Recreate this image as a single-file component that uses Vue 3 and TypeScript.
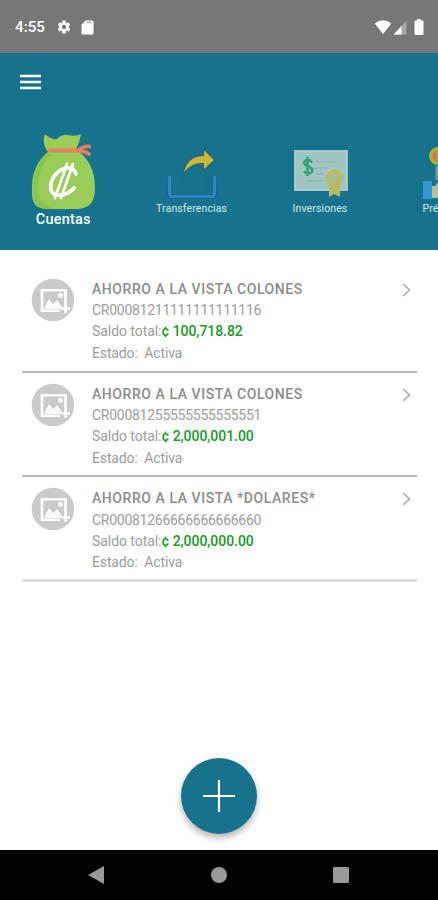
<script setup lang="ts">
interface Account {
  name: string
  number: string
  balance: string
  status: string
}

const accounts: Account[] = [
  { name: 'AHORRO A LA VISTA COLONES', number: 'CR00081211111111111116', balance: '100,718.82', status: 'Activa' },
  { name: 'AHORRO A LA VISTA COLONES', number: 'CR00081255555555555551', balance: '2,000,001.00', status: 'Activa' },
  { name: 'AHORRO A LA VISTA *DOLARES*', number: 'CR00081266666666666660', balance: '2,000,000.00', status: 'Activa' },
]
</script>

<template>
  <div class="screen">
    <header class="status">
      <span class="time">4:55</span>
      <svg class="gear" width="16" height="16" viewBox="0 0 24 24" fill="#fff"><path d="M19.14 12.94a7 7 0 0 0 0-1.88l2.03-1.58a.5.5 0 0 0 .12-.61l-1.92-3.32a.5.5 0 0 0-.59-.22l-2.39.96a7 7 0 0 0-1.62-.94l-.36-2.54A.5.5 0 0 0 13.92 2.4h-3.84a.5.5 0 0 0-.48.41l-.36 2.54a7.3 7.3 0 0 0-1.62.94l-2.39-.96a.5.5 0 0 0-.59.22L2.74 8.87a.5.5 0 0 0 .12.61l2.03 1.58a7 7 0 0 0 0 1.88l-2.03 1.58a.5.5 0 0 0-.12.61l1.92 3.32c.12.22.37.29.59.22l2.39-.96c.5.38 1.03.7 1.62.94l.36 2.54c.05.24.24.41.48.41h3.84c.24 0 .44-.17.47-.41l.36-2.54a7 7 0 0 0 1.62-.94l2.39.96c.22.08.47 0 .59-.22l1.92-3.32a.5.5 0 0 0-.12-.61zM12 15.2a3.2 3.2 0 1 1 0-6.4 3.2 3.2 0 0 1 0 6.4z" /></svg>
      <svg class="card" width="13" height="15" viewBox="0 0 13 15"><path d="M4.7.5H11A1.5 1.5 0 0 1 12.5 2v11a1.5 1.5 0 0 1-1.5 1.5H2A1.5 1.5 0 0 1 .5 13V4.7z" fill="#fff" /><path d="M5.500 2.500h5" stroke="#aaa" stroke-width="1.500" /></svg>
      <div class="signals">
        <svg width="18" height="15" viewBox="0 0 18 15"><path d="M.7 3.500Q9-2.800 17.300 3.500L9 14z" fill="#fff" /></svg>
        <svg width="14" height="15" viewBox="0 0 14 15"><path d="M13.500.5v14H.5z" fill="#a8a8a8" /><path d="M8.500 5.900v8.600H.5z" fill="#fff" /></svg>
        <svg class="battery" width="10" height="16" viewBox="0 0 10 16"><path d="M3 0h4v1.500h1.500q1 0 1 1V15q0 1-1 1h-7q-1 0-1-1V2.500q0-1 1-1H3z" fill="#fff" /></svg>
      </div>
    </header>

    <section class="top">
      <svg class="menu" width="21" height="16" viewBox="0 0 21 16" stroke="#fff" stroke-width="2.400"><path d="M0 2h21M0 8h21M0 14h21" /></svg>
      <nav class="tabs">
        <div class="tab active">
          <svg width="66" height="78" viewBox="0 0 66 78">
            <path d="M18 19C13 12 13 6 15 1q6 6 12 5 5-5 11-4 7 2 13-1-1 8-5 15C58 25 65 36 65 55 65 71 58 76 45 76H19C6 76 2 71 2 59 1 41 7 28 18 19z" fill="#9acd57" />
            <path d="M17 21C6 30 2 43 3 60c1 10 5 15 14 16h8C11 70 5 62 8 50c2-10 4-21 15-29z" fill="#8bc350" />
            <path d="M20 17.500h28q6-5 11-4M47 17.500q7 0 12 3.500" fill="none" stroke="#e8815e" stroke-width="3.800" stroke-linecap="round" />
            <g fill="none" stroke="#fff" stroke-linecap="round"><path d="M46 41c-2-7-11-8-18-2-9 8-10 21-1 23 6 1 13-2 17-7" stroke-width="3.800" /><path d="M37 31 25 65M43 31 31 65" stroke-width="2.700" /></g>
          </svg>
          <span>Cuentas</span>
        </div>
        <div class="tab">
          <svg width="56" height="54" viewBox="0 0 56 54">
            <path d="M6 29H3v18q0 4 4 4h42q4 0 4-4V29h-3v17q0 2-3 2H9q-3 0-3-2z" fill="#1d609b" />
            <path d="M5.500 29v16.500q0 3 3 3h39q3 0 3-3V29" fill="none" stroke="#2f86c2" stroke-width="3" stroke-linecap="round" />
            <path d="M20 24Q24 8 40 8V2.500L50 12 40 21v-6Q28 14 20 24z" fill="#c9ba36" stroke="#2b6478" stroke-width="3" stroke-linejoin="round" />
            <path d="M20 24Q24 8 40 8V2.500L50 12 40 21v-6Q28 14 20 24z" fill="#c9ba36" />
            <path d="M20 26q-3 3-3 8M40 31h5M38 36h7M40 41h5" fill="none" stroke="#23658f" stroke-width="1.600" />
          </svg>
          <span class="transfer">Transferencias</span>
        </div>
        <div class="tab">
          <svg width="56" height="54" viewBox="0 0 56 54">
            <rect x="2" y="2" width="54" height="41" fill="#a1c5c2" /><path d="M3.500 3.500h51v38h-51z" fill="none" stroke="#b4cdc6" />
            <path d="M24 14h20M23 20h14M24 26h8M13 33h18" stroke="#90b6b3" stroke-width="1.500" />
            <path d="M20 14.500q-2-3-5-2.500-4 1-2.500 4 1 1.500 4 2.500 5 2 3.500 5-3 4-8 0M15.500 9v19" fill="none" stroke="#2ba477" stroke-width="2.500" />
            <path d="M37 35v14l5-3 6 3V35z" fill="#b8b963" /><circle cx="42.500" cy="30" r="8.500" fill="#c1b951" /><circle cx="42.500" cy="30" r="5" fill="#a6ba9b" />
          </svg>
          <span class="invest">Inversiones</span>
        </div>
        <div class="tab">
          <svg width="52" height="58" viewBox="0 0 52 58">
            <circle cx="16" cy="12" r="9" fill="#b8af35" /><circle cx="16" cy="12" r="5.500" fill="#bd7749" /><path d="M19 8h-5v8h5M14 12h4" fill="none" stroke="#c5af4a" />
            <path d="M15 22v14" stroke="#779aa0" stroke-width="3" /><rect x="1" y="37" width="9" height="18" fill="#3298d3" /><path d="M10 42h3l4-5h16v17H10z" fill="#b7bea0" />
          </svg>
          <span class="loan">Préstamos</span>
        </div>
      </nav>
    </section>

    <main class="accounts">
      <article v-for="account in accounts" :key="account.number" class="account">
        <svg class="picture" width="44" height="44" viewBox="0 0 44 44">
          <circle cx="22" cy="22" r="21.300" fill="#cacaca" />
          <path d="M34.500 26V12.200H11v20.600h18" fill="none" stroke="#fff" stroke-width="2.600" />
          <path d="m13.500 29 4.500-8 4 5 4-4 5 7v2H13.500z" fill="#fff" opacity=".9" /><circle cx="29.500" cy="17.500" r="2.500" fill="#fff" />
          <path d="M34.500 26v9M30 30.500h9" stroke="#fff" stroke-width="2.500" />
        </svg>
        <div class="details">
          <div class="title">{{ account.name }}</div>
          <div class="number">{{ account.number }}</div>
          <div class="balance">Saldo total:<b>¢ {{ account.balance }}</b></div>
          <div class="state">Estado:&nbsp; {{ account.status }}</div>
        </div>
        <svg class="chevron" width="9" height="14" viewBox="0 0 9 14"><path d="m1 1 6.500 6L1 13" fill="none" stroke="#acacac" stroke-width="1.700" /></svg>
      </article>
    </main>
    <div class="action-area">
      <button class="add" aria-label="Agregar"><svg width="34" height="34" viewBox="0 0 34 34"><path d="M17 1v32M1 17h32" stroke="#fff" stroke-width="2.200" /></svg></button>
    </div>
    <footer class="navigation">
      <svg width="18" height="20" viewBox="0 0 18 20"><path d="M17 1v18L1 10z" fill="#999" /></svg>
      <svg width="18" height="18" viewBox="0 0 18 18"><circle cx="9" cy="9" r="8" fill="#999" /></svg>
      <svg width="18" height="18" viewBox="0 0 18 18"><rect x="1" y="1" width="16" height="16" rx="1" fill="#999" /></svg>
    </footer>
  </div>
</template>

<style>
body { margin: 0; background: #fff; }
</style>

<style scoped>
* { box-sizing: border-box; }
svg { display: block; flex-shrink: 0; }
.screen { width: 100%; height: 900px; display: flex; flex-direction: column; overflow: hidden; background: #fff; font-family: Roboto, sans-serif; }
.status { height: 53px; flex-shrink: 0; padding: 1px 14px 0 15px; display: flex; align-items: center; background: #777; color: #fff; }
.time { width: 30px; font-size: 15px; font-weight: 500; letter-spacing: .1px; }
.gear { margin-left: 11px; }
.card { margin-left: 9px; }
.signals { display: flex; align-items: center; gap: 1px; margin-left: auto; }
.battery { margin-left: 6px; }
.top { height: 197px; flex-shrink: 0; padding-top: 21px; background: #17738d; overflow: hidden; }
.menu { margin-left: 20px; }
.tabs { display: flex; height: 138px; margin: 4px 0 0 -1px; }
.tab { width: 128.400px; flex-shrink: 0; display: flex; flex-direction: column; align-items: center; padding-top: 54px; color: #d9e8ed; font-size: 10.500px; line-height: 12px; letter-spacing: .12px; }
.tab.active { padding-top: 39px; color: #fff; font-size: 14.500px; font-weight: 500; line-height: 17px; letter-spacing: .2px; }
.tab span { white-space: nowrap; }
.tab:nth-child(n+2) span { margin-top: 1px; }
.tab:last-child svg { margin-top: -4px; }
.accounts { margin: 18px 21px 0 22px; }
.account { height: 104.300px; display: flex; padding: 10px 6px 0 9px; border-bottom: 2px solid #bcbcbc; color: #9c9c9c; }
.account:first-child { height: 105px; }
.account:last-child { border-bottom: 3px solid #ddd; }
.details { flex: 1; margin: 1px 0 0 17px; font-size: 14px; line-height: 21.200px; white-space: nowrap; }
.title { color: #8b8b8b; font-weight: 500; letter-spacing: .56px; }
.number { letter-spacing: -.27px; }
.balance { letter-spacing: -.06px; }
.balance b { color: #159a25; font-weight: 500; }
.state { letter-spacing: -.14px; }
.chevron { margin-top: 5px; }
.action-area { margin-top: auto; height: 92px; display: flex; justify-content: center; align-items: flex-start; }
.add { width: 76px; height: 76px; padding: 0; border: 0; border-radius: 50%; display: flex; align-items: center; justify-content: center; background: #17738d; box-shadow: 0 4px 7px rgba(0,0,0,.3); }
.navigation { height: 50px; flex-shrink: 0; display: flex; align-items: center; justify-content: space-between; padding: 0 88px 0 87px; background: #000; }
</style>
